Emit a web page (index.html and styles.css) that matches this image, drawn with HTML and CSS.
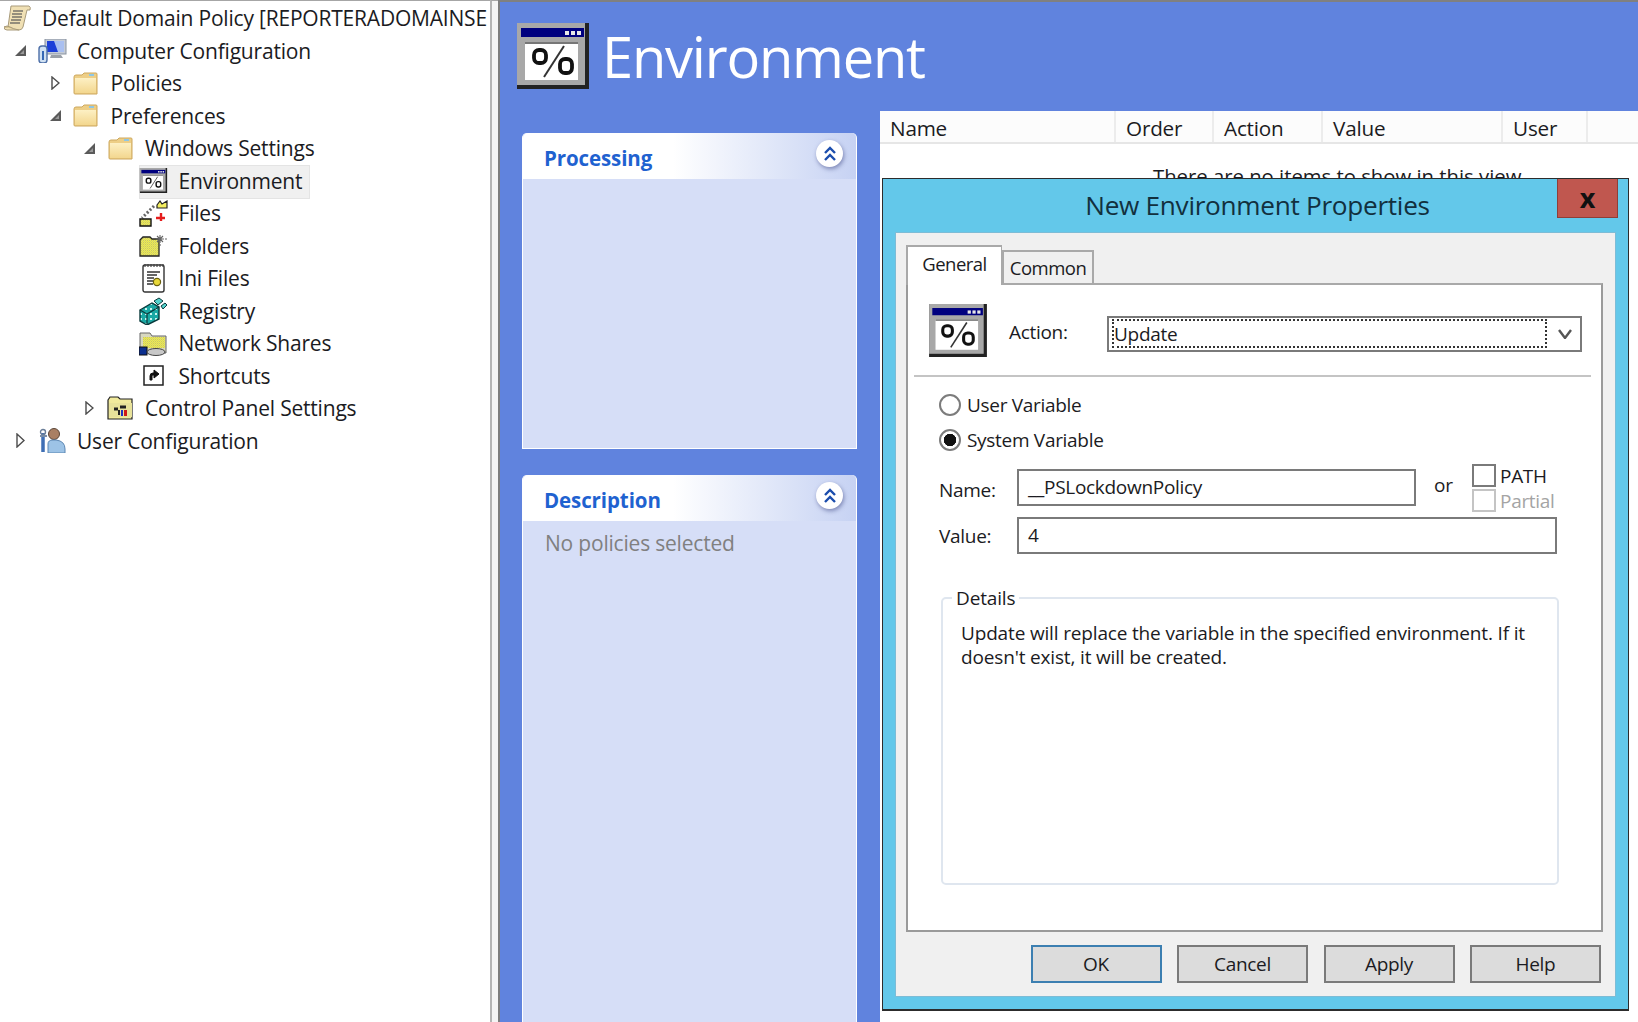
FILE: index.html
```html
<!DOCTYPE html>
<html lang="en">
<head>
<meta charset="utf-8">
<title>Environment</title>
<link rel="stylesheet" href="styles.css">
</head>
<body>
<svg class="defs" aria-hidden="true">
  <defs>
    <pattern id="check" width="2" height="2" patternUnits="userSpaceOnUse">
      <rect width="2" height="2" fill="#f2ee4c"/><rect width="1" height="1" fill="#c4c470"/><rect x="1" y="1" width="1" height="1" fill="#d4d468"/>
    </pattern>
    <pattern id="teal" width="5" height="5" patternUnits="userSpaceOnUse">
      <rect width="5" height="5" fill="#1aa8a4"/><rect x="1" y="1" width="2" height="2" fill="#c8f4f0"/>
    </pattern>
    <linearGradient id="fold" x1="0" y1="0" x2="0" y2="1"><stop offset="0" stop-color="#fdf0c4"/><stop offset="1" stop-color="#f3d78f"/></linearGradient>
    <symbol id="env" viewBox="0 0 72 66">
      <rect width="72" height="66" fill="#222"/>
      <rect y="0" width="68" height="62" fill="#a8a8a8"/>
      <rect x="4" y="5" width="63" height="9" fill="#00007f"/>
      <rect x="48" y="8" width="4" height="4" fill="#e8e8e8"/><rect x="54" y="8" width="4" height="4" fill="#e8e8e8"/><rect x="60" y="8" width="4" height="4" fill="#e8e8e8"/>
      <rect x="8" y="19" width="53" height="38" fill="#fff"/>
      <rect x="8" y="19" width="53" height="2" fill="#777"/>
      <rect x="17" y="27" width="12" height="13" rx="5" fill="none" stroke="#111" stroke-width="3.800"/>
      <rect x="43" y="36" width="12" height="14" rx="5" fill="none" stroke="#111" stroke-width="3.800"/>
      <path d="M47 23 27 54" stroke="#333" stroke-width="2"/>
    </symbol>
    <symbol id="folder" viewBox="0 0 25 23">
      <path d="M1 5Q1 3 3 3H9L11 1H23Q24 1 24 2V22H2Q1 22 1 21Z" fill="#edce86" stroke="#cda85e"/>
      <path d="M2 6H23V21H2Z" fill="url(#fold)"/>
      <rect x="16" y="2" width="5" height="2" fill="#8ec7e6"/>
    </symbol>
  </defs>
</svg>

<aside class="tree">
  <div class="row">
    <span class="slot-root">
      <svg class="ico" width="27" height="26" viewBox="0 0 27 26"><path d="M7 1H25Q27 2 26 5H23L19 22Q18 25 15 25H3Q0 25 0 22H4Z" fill="#f0e0b4" stroke="#a89a7a"/><path d="M9 6H19M8 9H18M8 12H18M7 15H17M6 18H16" stroke="#77736a" stroke-width="1.3"/><path d="M0 22Q3 20 6 22T15 25" fill="#d9c68e" stroke="#a89a7a"/></svg>
    </span>
    <span class="label">Default Domain Policy [REPORTERADOMAINSE</span>
  </div>
  <div class="row l1">
    <span class="tog"><svg width="11" height="11" viewBox="0 0 11 11"><path d="M0 11H11V0Z" fill="#5a5a5a"/><path d="M5 9H9V5Z" fill="#9a9a9a"/></svg></span>
    <span class="slot"><svg width="29" height="24" viewBox="0 0 29 24"><rect x="7" y="0" width="21" height="15" fill="#c4cbd6" stroke="#8a93a0"/><rect x="9" y="2" width="17" height="11" fill="#1c3fd8"/><path d="M16 2H26V13H20Z" fill="#a9bff0"/><path d="M13 16H23L25 19H12Z" fill="#9aa0a8"/><rect x="1" y="7" width="8" height="17" rx="3" fill="#cfe0f2" stroke="#4d6fa8" stroke-width="1.4"/><rect x="4" y="12" width="2" height="9" fill="#3568b5"/></svg></span>
    <span class="label">Computer Configuration</span>
  </div>
  <div class="row l2">
    <span class="tog"><svg width="9" height="14" viewBox="0 0 9 14"><path d="M1 1 8 7 1 13Z" fill="#fff" stroke="#4c4c4c" stroke-width="1.4"/></svg></span>
    <span class="slot"><svg width="25" height="23"><use href="#folder"/></svg></span>
    <span class="label">Policies</span>
  </div>
  <div class="row l2">
    <span class="tog"><svg width="11" height="11" viewBox="0 0 11 11"><path d="M0 11H11V0Z" fill="#5a5a5a"/><path d="M5 9H9V5Z" fill="#9a9a9a"/></svg></span>
    <span class="slot"><svg width="25" height="23"><use href="#folder"/></svg></span>
    <span class="label">Preferences</span>
  </div>
  <div class="row l3">
    <span class="tog"><svg width="11" height="11" viewBox="0 0 11 11"><path d="M0 11H11V0Z" fill="#5a5a5a"/><path d="M5 9H9V5Z" fill="#9a9a9a"/></svg></span>
    <span class="slot"><svg width="25" height="23"><use href="#folder"/></svg></span>
    <span class="label">Windows Settings</span>
  </div>
  <div class="row l4 selected">
    <span class="tog"></span>
    <span class="slot"><svg width="29" height="25"><use href="#env"/></svg></span>
    <span class="label">Environment</span>
  </div>
  <div class="row l4">
    <span class="tog"></span>
    <span class="slot"><svg width="29" height="27" viewBox="0 0 29 27"><path d="M18 5 21 1 23 4 28 1V8H18Z" fill="#f4ee60" stroke="#222" stroke-width="1.2"/><path d="M15 6 3 18" stroke="#666" stroke-width="3" stroke-dasharray="2 2"/><path d="M1 19H12V26H1Z" fill="url(#check)" stroke="#111" stroke-width="1.4"/><path d="M22 13V21M17 18H26" stroke="#e51c1c" stroke-width="2.4"/></svg></span>
    <span class="label">Files</span>
  </div>
  <div class="row l4">
    <span class="tog"></span>
    <span class="slot"><svg width="29" height="23" viewBox="0 0 29 23"><path d="M1 6 4 3H11L13 5H20V22H1Z" fill="url(#check)" stroke="#222" stroke-width="1.3"/><path d="M21 1V9M17 5H25M18 2 24 8M24 2 18 8M28 5H26M21 12V10" stroke="#666" stroke-width="1.1"/></svg></span>
    <span class="label">Folders</span>
  </div>
  <div class="row l4">
    <span class="tog"></span>
    <span class="slot"><svg width="24" height="30" viewBox="0 0 24 30"><rect x="1" y="2" width="21" height="27" rx="2" fill="#fff" stroke="#333" stroke-width="1.4"/><path d="M3 1V4M6 1V4M9 1V4M12 1V4M15 1V4M18 1V4M21 1V4" stroke="#444" stroke-width="1.2"/><path d="M5 9H18M5 12H15M5 15H12M5 18H11M5 21H11" stroke="#333" stroke-width="1.3"/><circle cx="15" cy="19" r="3.6" fill="#e8d83a" stroke="#6a6010" stroke-width="1.2"/></svg></span>
    <span class="label">Ini Files</span>
  </div>
  <div class="row l4">
    <span class="tog"></span>
    <span class="slot"><svg width="29" height="28" viewBox="0 0 29 28"><path d="M1 13 13 6 20 10V22L8 28 1 24Z" fill="url(#teal)" stroke="#0a3a3c" stroke-width="1.4"/><path d="M1 13 8 17V28M8 17 20 10" fill="none" stroke="#0a3a3c" stroke-width="1.2"/><path d="M15 4 20 1 24 4 19 8Z" fill="#53d1cc" stroke="#0a3a3c"/><path d="M22 9 26 6 28 8 24 12Z" fill="#53d1cc" stroke="#0a3a3c"/></svg></span>
    <span class="label">Registry</span>
  </div>
  <div class="row l4">
    <span class="tog"></span>
    <span class="slot"><svg width="29" height="25" viewBox="0 0 29 25"><path d="M1 2H11L13 5H27V22H1Z" fill="#d8d8c0" stroke="#666"/><rect x="4" y="6" width="22" height="11" fill="url(#check)"/><rect x="0" y="16" width="8" height="8" fill="#0c2f8f" stroke="#111"/><ellipse cx="17" cy="21" rx="9" ry="3.5" fill="#c8c8c8" stroke="#444"/></svg></span>
    <span class="label">Network Shares</span>
  </div>
  <div class="row l4">
    <span class="tog"></span>
    <span class="slot"><svg width="21" height="21" viewBox="0 0 21 21"><rect x="1" y="1" width="19" height="19" fill="#fff" stroke="#222" stroke-width="1.5"/><path d="M7 15V11Q7 8 10 8H11V5L16 9 11 13V10H10Q9 10 9 11V15Z" fill="#111" stroke="#111"/></svg></span>
    <span class="label">Shortcuts</span>
  </div>
  <div class="row l3">
    <span class="tog"><svg width="9" height="14" viewBox="0 0 9 14"><path d="M1 1 8 7 1 13Z" fill="#fff" stroke="#4c4c4c" stroke-width="1.4"/></svg></span>
    <span class="slot"><svg width="27" height="24" viewBox="0 0 27 24"><path d="M1 4 3 1H11L13 3H25V23H1Z" fill="#f1ea9c" stroke="#222" stroke-width="1.2"/><rect x="2" y="7" width="23" height="14" fill="#e8e29a"/><path d="M7 13H11M13 11H19" stroke="#222" stroke-width="3"/><rect x="14" y="14" width="2" height="6" fill="#2030c0"/><rect x="17" y="14" width="3" height="6" fill="#d01818"/><rect x="11" y="14" width="2" height="5" fill="#222"/></svg></span>
    <span class="label">Control Panel Settings</span>
  </div>
  <div class="row l1">
    <span class="tog"><svg width="9" height="15" viewBox="0 0 9 15"><path d="M1 1 8 7.500 1 14Z" fill="#fff" stroke="#4c4c4c" stroke-width="1.4"/></svg></span>
    <span class="slot"><svg width="27" height="25" viewBox="0 0 27 25"><circle cx="15" cy="6" r="5.500" fill="#a97f63" stroke="#5a4638"/><path d="M9 25V16Q9 12 14 12H17Q26 13 26 21V25Z" fill="#9dc3e6" stroke="#5b86b3"/><path d="M4 5V24" stroke="#3f6fb5" stroke-width="3.5"/><path d="M1 8H8" stroke="#7a8ea8" stroke-width="2"/><circle cx="4" cy="4" r="2.500" fill="none" stroke="#6a7e98" stroke-width="1.4"/></svg></span>
    <span class="label">User Configuration</span>
  </div>
</aside>

<div class="splitter"></div>

<main class="main">
  <header class="head">
    <svg class="head-icon" width="72" height="66"><use href="#env"/></svg>
    <h1 class="head-title">Environment</h1>
  </header>
  <div class="work">
    <div class="side">
      <section class="card card-a">
        <div class="card-head">
          <span class="card-title">Processing</span>
          <span class="collapse"><svg width="14" height="16" viewBox="0 0 14 16"><path d="M2 7 7 2 12 7M2 14 7 9 12 14" fill="none" stroke="#1b4dad" stroke-width="2.4"/></svg></span>
        </div>
      </section>
      <section class="card card-b">
        <div class="card-head">
          <span class="card-title">Description</span>
          <span class="collapse"><svg width="14" height="16" viewBox="0 0 14 16"><path d="M2 7 7 2 12 7M2 14 7 9 12 14" fill="none" stroke="#1b4dad" stroke-width="2.4"/></svg></span>
        </div>
        <p class="card-note">No policies selected</p>
      </section>
    </div>
    <div class="list">
      <div class="list-head">
        <span class="col col-name">Name</span>
        <span class="col col-order">Order</span>
        <span class="col col-action">Action</span>
        <span class="col col-value">Value</span>
        <span class="col col-user">User</span>
      </div>
      <p class="list-empty">There are no items to show in this view.</p>

      <div class="dialog">
        <div class="dialog-title">New Environment Properties</div>
        <button class="close" type="button">x</button>
        <div class="dialog-panel">
          <div class="tabs">
            <span class="tab tab-on">General</span>
            <span class="tab">Common</span>
          </div>
          <div class="tab-body">
            <div class="action-row">
              <svg class="action-icon" width="58" height="53"><use href="#env"/></svg>
              <span class="action-label">Action:</span>
              <div class="select">
                <span class="select-focus">Update</span>
                <svg class="select-arrow" width="14" height="10" viewBox="0 0 14 10"><path d="M1 1 7 9 13 1" fill="none" stroke="#555" stroke-width="2.4"/></svg>
              </div>
            </div>
            <hr class="divider">
            <div class="form">
              <label class="radio-row"><span class="radio"></span>User Variable</label>
              <label class="radio-row"><span class="radio radio-on"></span>System Variable</label>
              <div class="name-row">
                <span class="field-label">Name:</span>
                <div class="input input-name">__PSLockdownPolicy</div>
                <span class="or">or</span>
                <div class="checks">
                  <label class="check-row"><span class="check"></span>PATH</label>
                  <label class="check-row check-off"><span class="check"></span>Partial</label>
                </div>
              </div>
              <div class="value-row">
                <span class="field-label">Value:</span>
                <div class="input input-value">4</div>
              </div>
              <fieldset class="details">
                <legend>Details</legend>
                <p>Update will replace the variable in the specified environment. If it doesn't exist, it will be created.</p>
              </fieldset>
            </div>
          </div>
          <div class="buttons">
            <button class="btn btn-default" type="button">OK</button>
            <button class="btn" type="button">Cancel</button>
            <button class="btn" type="button">Apply</button>
            <button class="btn" type="button">Help</button>
          </div>
        </div>
      </div>
    </div>
  </div>
</main>
</body>
</html>
```

FILE: styles.css
```css
* { box-sizing: border-box; }
html, body { height: 100%; }
body {
  margin: 0;
  display: flex;
  overflow: hidden;
  background: #fff;
  color: #1b1b22;
  font-family: "Open Sans", "Noto Sans", sans-serif;
  font-size: 20px;
}
.defs { position: absolute; width: 0; height: 0; }
svg { display: block; flex: none; }

/* tree */
.tree {
  width: 490px;
  flex: none;
  padding-top: 1px;
  border-top: 1px solid #a6a6a6;
  overflow: hidden;
  font-size: 21px;
  letter-spacing: -0.200px;
}
.row { display: flex; align-items: center; height: 32.500px; white-space: nowrap; }
.slot-root { width: 35px; flex: none; display: flex; justify-content: center; }
.slot-root + .label { margin-left: 7px; }
.tog { width: 24px; flex: none; display: flex; justify-content: center; }
.slot { width: 40px; flex: none; display: flex; justify-content: center; }
.row .slot + .label { margin-left: 5px; }
.l1 { padding-left: 8px; }
.l2 { padding-left: 41.500px; }
.l2 .tog { padding-left: 3px; }
.l3 { padding-left: 76px; }
.l3 .tog { padding-left: 2px; }
.l4 { padding-left: 109.500px; }
.selected { position: relative; }
.selected::before {
  content: "";
  position: absolute;
  left: 139px;
  top: 0;
  width: 169px;
  height: 32px;
  background: #f0f0f0;
  border: 1px solid #e4e4e4;
}
.selected > * { position: relative; }

.splitter {
  width: 8px;
  flex: none;
  background: #f4f4f4;
  border-left: 2px solid #b4b4b4;
  border-top: 1px solid #a6a6a6;
}

/* main */
.main {
  flex: 1;
  min-width: 0;
  display: flex;
  flex-direction: column;
  background: #6083de;
  border-left: 2px solid #7d7d7d;
  border-top: 2px solid #808080;
  overflow: hidden;
}
.head {
  height: 109px;
  flex: none;
  display: flex;
  align-items: flex-start;
  padding: 21px 0 0 17px;
  gap: 13px;
}
.head-title {
  margin: -7px 0 0;
  font-size: 56px;
  line-height: 80px;
  font-weight: 400;
  color: #fff;
  letter-spacing: -1.200px;
}
.work { flex: 1; min-height: 0; display: flex; }
.side {
  width: 380px;
  flex: none;
  padding: 22px 23px 0 22px;
  display: flex;
  flex-direction: column;
  gap: 26px;
}
.card {
  background: #d6def7;
  border: 1px solid #fff;
  border-top: 0;
  border-radius: 5px 5px 0 0;
}
.card-a { height: 316px; }
.card-b { flex: 1; margin-bottom: -10px; }
.card-head {
  height: 46px;
  display: flex;
  align-items: center;
  justify-content: space-between;
  padding: 0 13px 0 21px;
  background: linear-gradient(90deg, #fff 45%, #c6d2f3 100%);
  border-radius: 5px 5px 0 0;
}
.card-title {
  font-size: 20.500px;
  font-weight: 700;
  color: #1f62d0;
  letter-spacing: -0.100px;
  padding-top: 4px;
}
.collapse {
  width: 27px;
  height: 27px;
  margin-top: -5px;
  border-radius: 50%;
  background: #fff;
  box-shadow: 1px 2px 4px rgba(60, 70, 130, .55);
  display: flex;
  align-items: center;
  justify-content: center;
}
.card-note { margin: 8px 0 0 22px; color: #808080; font-size: 21px; letter-spacing: -0.200px; }

/* list */
.list { flex: 1; min-width: 0; background: #fff; position: relative; }
.list-head {
  height: 33px;
  display: flex;
  background: #fcfcfc;
  border-bottom: 2px solid #e6e6e6;
  font-size: 20.700px;
  letter-spacing: -0.200px;
}
.col {
  padding: 0 0 0 10px;
  line-height: 35px;
  border-right: 2px solid #ececec;
}
.col-name { width: 236px; }
.col-order { width: 98px; }
.col-action { width: 109px; }
.col-value { width: 180px; }
.col-user { width: 85px; }
.list-empty {
  margin: 0;
  padding-top: 19px;
  padding-left: 273px;
  font-size: 20.300px;
  line-height: 27px;
}

/* dialog (window on the desktop) */
.dialog {
  position: absolute;
  left: 2px;
  top: 67px;
  width: 747px;
  height: 833px;
  background: #63c8ea;
  border: 1px solid #2c2c2c;
  border-width: 1px 1px 2px;
  display: flex;
  flex-direction: column;
  padding: 0 13px 13px;
}
.dialog-title {
  height: 54px;
  flex: none;
  padding-left: 4px;
  line-height: 52px;
  text-align: center;
  font-size: 26.200px;
  color: #12303e;
  letter-spacing: -0.300px;
}
.close {
  position: absolute;
  left: 674px;
  top: 0;
  width: 61px;
  height: 39px;
  padding: 0 0 10px;
  border: 1px solid #8f3e38;
  border-top: 0;
  background: #c0574f;
  color: #111;
  font: 700 27px "Open Sans", sans-serif;
}
.dialog-panel {
  flex: 1;
  background: #f0f0f0;
  padding: 14px 12px 0 10px;
  display: flex;
  flex-direction: column;
  box-shadow: 0 0 0 1px #7dbcd6;
}
.tabs { display: flex; align-items: flex-end; height: 36px; flex: none; position: relative; z-index: 1; }
.tab {
  width: 92px;
  height: 33px;
  line-height: 32px;
  text-align: center;
  background: #f0f0f0;
  border: 2px solid #a9a9a9;
  border-bottom: 0;
  font-size: 18.500px;
  letter-spacing: -0.500px;
}
.tab-on {
  width: 96px;
  height: 40px;
  line-height: 34px;
  background: #fff;
  margin-bottom: -2px;
  border-right-width: 1px;
}
.tab-body {
  height: 649px;
  flex: none;
  background: #fff;
  border: 2px solid #9a9a9a;
  border-top-color: #a9a9a9;
  padding: 19px 11px 0 4px;
}
.action-row { display: flex; align-items: center; height: 53px; padding-left: 17px; }
.action-label { margin: 3px 0 0 22px; width: 98px; font-size: 19px; letter-spacing: -0.300px; }
.select {
  width: 475px;
  height: 36px;
  margin-top: 6px;
  border: 2px solid #7a7a7a;
  background: #fff;
  display: flex;
  align-items: center;
  padding: 0 8px 0 4px;
  gap: 12px;
}
.select-focus {
  flex: 1;
  height: 27px;
  line-height: 29px;
  outline: 2px dotted #333;
  outline-offset: -1px;
  padding-left: 1px;
  font-size: 19px;
  letter-spacing: -0.300px;
}
.divider { margin: 18px 0 0 2px; border: 0; border-top: 2px solid #c4c4c4; width: 677px; }
.form { padding: 17px 0 0 27px; font-size: 19px; letter-spacing: -0.300px; }
.radio-row { display: flex; align-items: center; gap: 6px; height: 22px; margin-bottom: 13px; }
.radio {
  width: 22px;
  height: 22px;
  flex: none;
  border-radius: 50%;
  border: 2px solid #7c7c7c;
  background: #fff;
}
.radio-on { background: radial-gradient(circle, #111 0 6px, #fff 6.500px); }
.name-row { display: flex; align-items: flex-start; height: 53px; margin-top: 1px; }
.field-label { width: 78px; flex: none; }
.name-row .field-label { padding-top: 13px; }
.input {
  height: 37px;
  border: 2px solid #7a7a7a;
  background: #fff;
  padding-left: 9px;
  line-height: 33px;
}
.input-name { width: 399px; margin-top: 5px; }
.or { margin: 8px 0 0 18px; width: 38px; flex: none; }
.checks { display: flex; flex-direction: column; gap: 2px; }
.check-row { display: flex; align-items: center; gap: 4px; height: 23px; }
.check { width: 24px; height: 23px; flex: none; border: 2px solid #7a7a7a; background: #fff; }
.check-off { color: #a4a4a4; }
.check-off .check { border-color: #c4c4c4; }
.value-row { display: flex; align-items: center; }
.input-value { width: 540px; }
.details {
  margin: 32px 0 0 2px;
  padding: 0;
  width: 618px;
  height: 299px;
  border: 2px solid #dfe6ef;
  border-radius: 5px;
  letter-spacing: -0.160px;
}
.details legend { padding: 0 4px; margin-left: 9px; line-height: 24px; }
.details p { margin: 12px 18px 0 18px; line-height: 23.500px; }
.buttons { display: flex; justify-content: flex-end; gap: 15.500px; padding: 13px 2px 0 0; }
.btn {
  width: 131px;
  height: 38px;
  border: 2px solid #7a7a7a;
  background: #dcdcdc;
  color: #1b1b22;
  font: 400 19px "Open Sans", sans-serif;
  letter-spacing: -0.300px;
  padding: 0;
}
.btn-default { border-color: #3c7fb1; }
```
